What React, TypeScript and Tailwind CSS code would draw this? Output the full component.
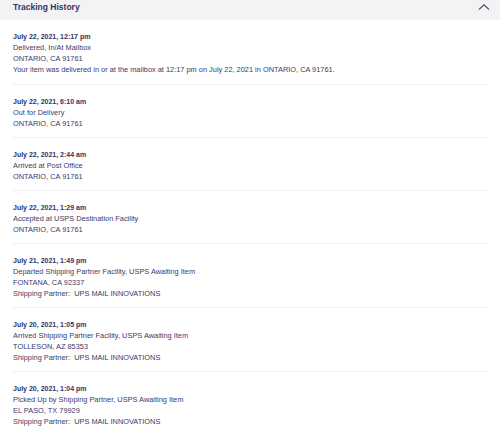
import React from "react";

type Entry = { date: string; lines: string[] };

const entries: Entry[] = [
  {
    date: "July 22, 2021, 12:17 pm",
    lines: [
      "Delivered, In/At Mailbox",
      "ONTARIO, CA 91761",
      "Your item was delivered in or at the mailbox at 12:17 pm on July 22, 2021 in ONTARIO, CA 91761.",
    ],
  },
  { date: "July 22, 2021, 6:10 am", lines: ["Out for Delivery", "ONTARIO, CA 91761"] },
  { date: "July 22, 2021, 2:44 am", lines: ["Arrived at Post Office", "ONTARIO, CA 91761"] },
  { date: "July 22, 2021, 1:29 am", lines: ["Accepted at USPS Destination Facility", "ONTARIO, CA 91761"] },
  {
    date: "July 21, 2021, 1:49 pm",
    lines: [
      "Departed Shipping Partner Facility, USPS Awaiting Item",
      "FONTANA, CA 92337",
      "Shipping Partner:  UPS MAIL INNOVATIONS",
    ],
  },
  {
    date: "July 20, 2021, 1:05 pm",
    lines: [
      "Arrived Shipping Partner Facility, USPS Awaiting Item",
      "TOLLESON, AZ 85353",
      "Shipping Partner:  UPS MAIL INNOVATIONS",
    ],
  },
  {
    date: "July 20, 2021, 1:04 pm",
    lines: [
      "Picked Up by Shipping Partner, USPS Awaiting Item",
      "EL PASO, TX 79929",
      "Shipping Partner:  UPS MAIL INNOVATIONS",
    ],
  },
];

export default function App() {
  return (
    <div
      className="w-[500px] h-[433px] bg-white overflow-hidden"
      style={{ fontFamily: '"Liberation Sans", Arial, sans-serif' }}
    >
      <div className="h-[20px] bg-[#f3f3f6] flex items-start justify-between pl-[13px] pr-[10px]">
        <span className="text-[8.5px] leading-[10px] pt-[2px] font-bold text-[#333366]">Tracking History</span>
        <svg width="12" height="8" viewBox="0 0 12 8" className="mt-[3px]">
          <path d="M1 6.5 L6 1.8 L11 6.5" fill="none" stroke="#4a4a6a" strokeWidth="1.1" />
        </svg>
      </div>
      <div className="pl-[13px] pr-[12px]">
        {entries.map((e, i) => (
          <div
            key={i}
            className={`${i === 0 ? "pt-[10.5px] pb-[9.5px]" : "pt-[11px] pb-[8px]"} ${
              i < entries.length - 1 ? "border-b border-[#f0f0f2]" : ""
            } text-[7.4px] leading-[11px] text-[#3a3a6a]`}
          >
            <div className="font-bold text-[7px] text-[#333366]">{e.date}</div>
            {e.lines.map((l, j) => (
              <div key={j} className="whitespace-pre">
                {l}
              </div>
            ))}
          </div>
        ))}
      </div>
    </div>
  );
}
